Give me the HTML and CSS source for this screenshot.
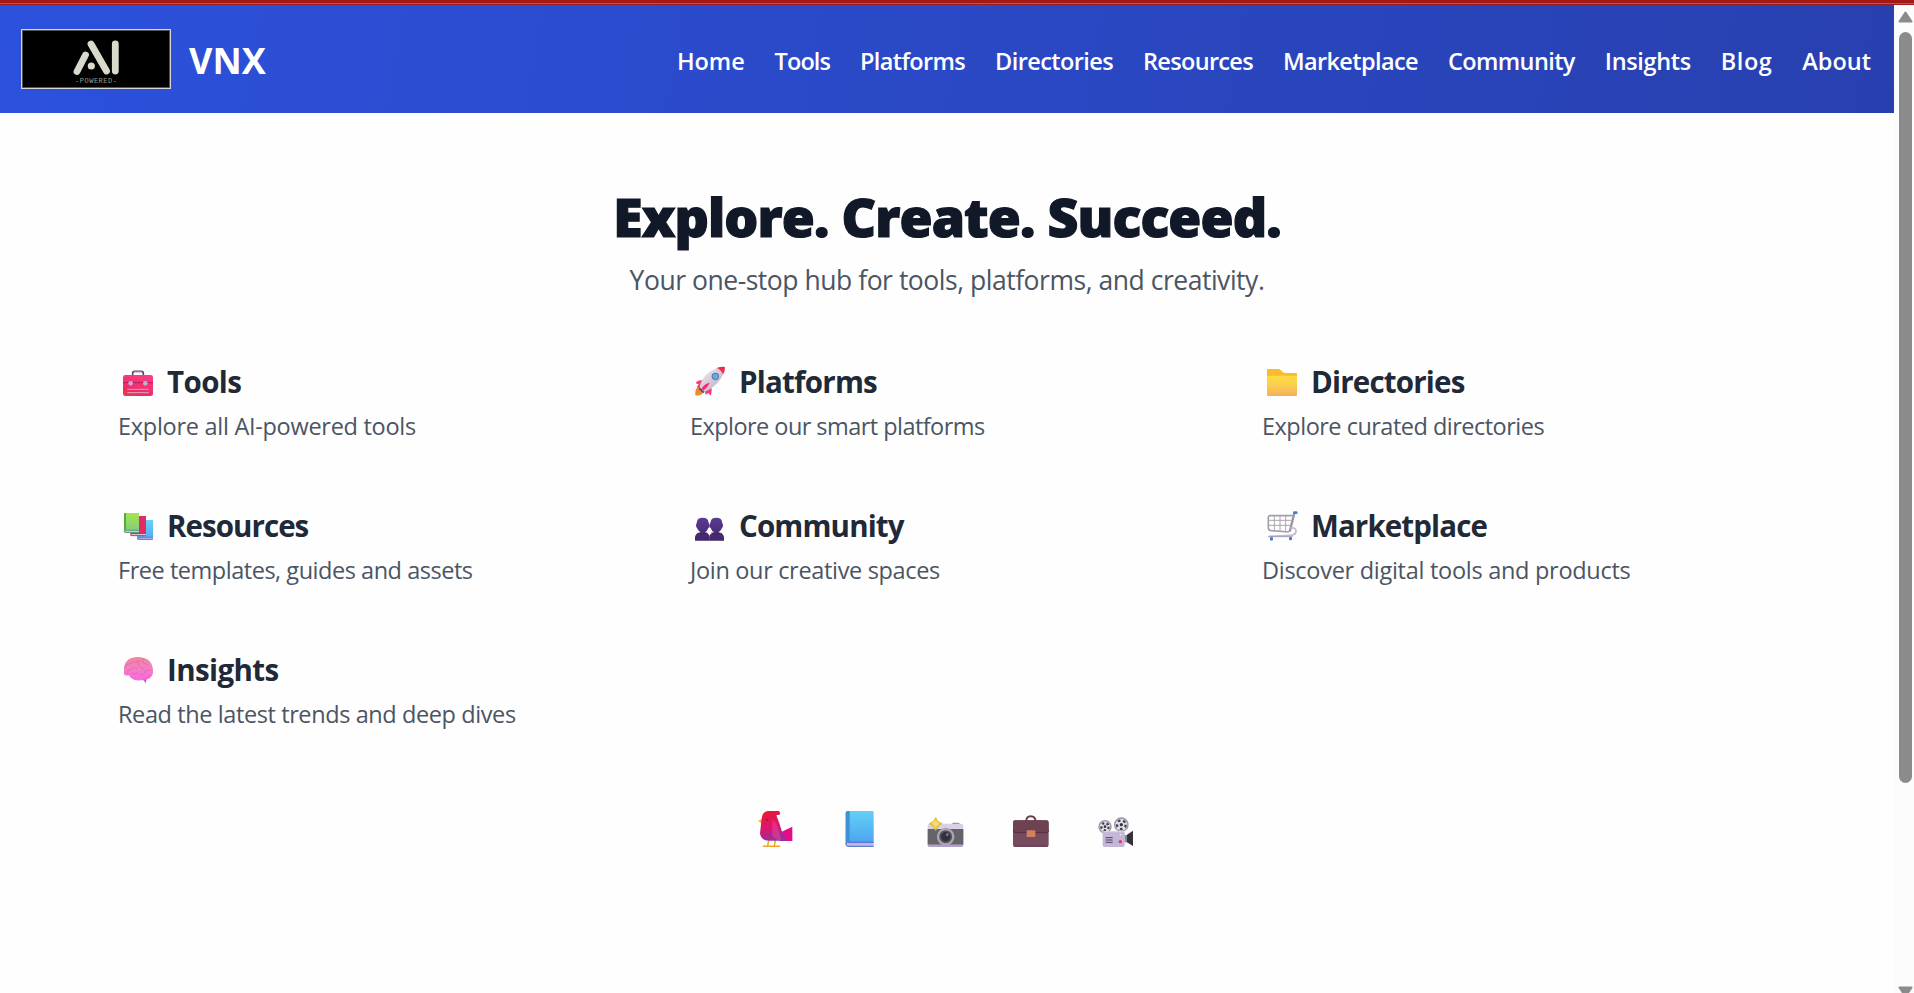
FILE: index.html
```html
<!DOCTYPE html>
<html lang="en">
<head>
<meta charset="utf-8">
<title>VNX</title>
<link rel="stylesheet" href="styles.css">
</head>
<body>
<div class="page">
  <div class="topline"></div>
  <div class="frame">
    <div class="content">
      <header class="header">
        <div class="brand">
          <svg class="logo" viewBox="0 0 150 60">
            <rect x=".5" y=".5" width="149" height="59" fill="#000" stroke="#d6d6d6"/>
            <rect x="1.5" y="1.5" width="147" height="57" fill="none" stroke="#555"/>
            <g stroke="#d9dacb" stroke-width="6.8" stroke-linecap="round">
              <path d="M56 42.500L64.500 26M70 15L85.500 42M94.300 15V42"/>
            </g>
            <circle cx="70.300" cy="37" r="3.600" fill="#d9dacb"/>
            <text x="75" y="53.800" class="logo-sub" textLength="42">-POWERED-</text>
          </svg>
          <span class="brand-name">VNX</span>
        </div>
        <nav class="nav">
          <a class="home">Home</a><a class="tools">Tools</a><a class="platforms">Platforms</a><a class="directories">Directories</a><a class="resources">Resources</a><a class="marketplace">Marketplace</a><a class="community">Community</a><a class="insights">Insights</a><a class="blog">Blog</a><a class="about">About</a>
        </nav>
      </header>
      <main>
        <h1>Explore. Create. Succeed.</h1>
        <p class="lead">Your one-stop hub for tools, platforms, and creativity.</p>
        <section class="grid">
          <article class="card card-tools">
            <h2><svg class="icon" viewBox="54 36 147 126">
              <defs><linearGradient id="tb" x1="0" y1="1" x2=".5" y2="0"><stop offset="0" stop-color="#e0413f"/><stop offset=".3" stop-color="#ee2a64"/><stop offset="1" stop-color="#f83c7e"/></linearGradient></defs>
              <path d="M98 77v-7q0-6 6-6h20q6 0 6 6v7" fill="none" stroke="#5b4668" stroke-width="5"/>
              <path d="M102 63h24" stroke="#b9a9c9" stroke-width="3"/>
              <rect x="69" y="75" width="90" height="63" rx="7" fill="url(#tb)"/>
              <path d="M69 98h90" stroke="#b81b52" stroke-width="3"/>
              <circle cx="92" cy="100" r="7" fill="#b9b0d3"/><circle cx="136" cy="100" r="7" fill="#b9b0d3"/>
              <path d="M82 118h64M82 128h64" stroke="#e0a3c4" stroke-width="3"/>
            </svg><span>Tools</span></h2>
            <p>Explore all AI-powered tools</p>
          </article>
          <article class="card card-platforms">
            <h2><svg class="icon" viewBox="60 36 147 126">
              <defs><linearGradient id="rk" x1="0" y1="0" x2="1" y2="1"><stop offset="0" stop-color="#f2eaf2"/><stop offset="1" stop-color="#b9a7bd"/></linearGradient></defs>
              <path d="M89 107Q73 114 76 136Q94 140 103 124Z" fill="#f28a24"/>
              <path d="M98 91Q82 89 77 100L86 103L80 112L94 113ZM122 105Q128 122 122 137L115 129L107 134L104 119Z" fill="#f5397b"/>
              <path d="M89 112Q95 73 142 54L161 70Q145 108 104 126Z" fill="url(#rk)"/>
              <path d="M140 54Q153 49 165 51Q166 63 159 73Q153 59 140 54Z" fill="#ea2e52"/>
              <path d="M89 112L104 126L99 130L86 117Z" fill="#684b75"/>
              <path d="M95 116L101 121Q113 112 119 98Q103 101 95 116Z" fill="#f4266d"/>
              <circle cx="136" cy="79" r="11" fill="#66718d"/><circle cx="136" cy="79" r="8" fill="#58aef8"/>
            </svg><span>Platforms</span></h2>
            <p>Explore our smart platforms</p>
          </article>
          <article class="card card-directories">
            <h2><svg class="icon" viewBox="66 36 147 126">
              <defs><linearGradient id="fd" x1="0" y1="0" x2="0" y2="1"><stop offset="0" stop-color="#fedc3f"/><stop offset=".45" stop-color="#fbcf4e"/><stop offset="1" stop-color="#f6ae5b"/></linearGradient></defs>
              <path d="M81 60q0-3 3-3h31q4 0 7 3l6 6q3 3 7 3h33q3 0 3 3v30H81Z" fill="#f8bc2c"/>
              <path d="M81 80q0-3 3-3h84q3 0 3 3v54q0 4-4 4H85q-4 0-4-4Z" fill="url(#fd)"/>
            </svg><span>Directories</span></h2>
            <p>Explore curated directories</p>
          </article>
          <article class="card card-resources">
            <h2><svg class="icon" viewBox="54 468 147 126">
              <defs><linearGradient id="b1" x1="0" y1="0" x2="0" y2="1"><stop offset="0" stop-color="#a5e34d"/><stop offset="1" stop-color="#7dcb80"/></linearGradient><linearGradient id="b2" x1="0" y1="0" x2="0" y2="1"><stop offset="0" stop-color="#69d2f5"/><stop offset="1" stop-color="#4fa8f3"/></linearGradient></defs>
              <path d="M112 510h47v60h-44q-4 0-4-5Z" fill="url(#b2)"/><path d="M159 562h-42q-4 0-4 3t4 3h42" fill="#c5bbed" stroke="#527fd9" stroke-width="3"/>
              <path d="M92 498h46v60H95q-4 0-4-5Z" fill="#df2c64"/><path d="M138 551H96q-4 0-4 3t4 3h42" fill="#ead4e8" stroke="#b5265e" stroke-width="2.500"/>
              <path d="M72 492q0-3 3-3h42v60H76q-4 0-4-5Z" fill="url(#b1)"/><path d="M72 492q0-3 3-3h3v50l-6 4Z" fill="#51a846"/><path d="M117 541H77q-4 0-4 3t4 3h40" fill="#d8dbea" stroke="#478a72" stroke-width="2.500"/>
            </svg><span>Resources</span></h2>
            <p>Free templates, guides and assets</p>
          </article>
          <article class="card card-community">
            <h2><svg class="icon" viewBox="60 468 147 126">
              <defs><linearGradient id="pp" x1="0" y1="0" x2="0" y2="1"><stop offset="0" stop-color="#5a3b93"/><stop offset="1" stop-color="#432667"/></linearGradient></defs>
              <path d="M81 515Q82 503 98 503T115 515Q119 524 119 528Q119 533 115 534Q112 543 105 547Q119 551 119 562V572H75V562Q76 550 91 547Q84 542 81 534Q78 532 78 526Z" fill="url(#pp)"/>
              <path d="M156 515Q155 503 139 503T122 515Q118 524 118 528Q118 533 122 534Q125 543 132 547Q118 551 118 562V572H162V562Q161 550 146 547Q153 542 156 534Q159 532 159 526Z" fill="url(#pp)"/>
              <path d="M82 550Q98 557 112 549M125 549Q139 557 155 550" fill="none" stroke="#3b2059" stroke-width="3"/>
            </svg><span>Community</span></h2>
            <p>Join our creative spaces</p>
          </article>
          <article class="card card-marketplace">
            <h2><svg class="icon" viewBox="66 468 147 126">
              <g fill="none" stroke="#aaa4b2" stroke-width="3"><path d="M103 498V543M120 498V544M137 498V544M87 511H154M87 526H150"/></g>
              <path d="M158 497H91q-6 0-6 6v30q0 8 9 9l53 4" fill="none" stroke="#a39fa9" stroke-width="5"/>
              <path d="M163 490L149 545" fill="none" stroke="#99949f" stroke-width="7"/>
              <path d="M151 534Q168 531 168 544Q167 555 151 556L86 559" fill="none" stroke="#c2b9cd" stroke-width="5"/>
              <path d="M85 560H158" stroke="#a796ba" stroke-width="3"/>
              <rect x="159" y="484" width="14" height="8" rx="4" fill="#467edb"/>
              <rect x="90" y="561" width="9" height="11" rx="4" fill="#467bd0"/><rect x="147" y="561" width="9" height="10" rx="4" fill="#467bd0"/>
            </svg><span>Marketplace</span></h2>
            <p>Discover digital tools and products</p>
          </article>
          <article class="card card-insights">
            <h2><svg class="icon" viewBox="54 30 147 126">
              <defs><linearGradient id="br" x1="0" y1="0" x2="0" y2="1"><stop offset="0" stop-color="#ee88a0"/><stop offset=".55" stop-color="#f47dc7"/><stop offset="1" stop-color="#f768e4"/></linearGradient></defs>
              <path d="M128 118L138 130L139 116Z" fill="#ed3fb9"/>
              <path d="M72 101V84Q75 62 92 55Q113 47 132 54Q153 60 158 82Q163 106 149 115Q139 122 128 120Q106 125 92 113Q89 107 85 106Q73 109 72 101Z" fill="url(#br)"/>
              <path d="M74 83Q80 69 91 72Q95 63 106 67Q113 60 124 64M82 99Q83 88 94 88Q102 79 112 85M111 67Q120 71 116 80M130 57Q126 66 132 70Q141 71 143 78M120 103Q133 107 135 94Q143 89 153 91M94 101Q105 104 113 98M129 120Q143 116 148 106M122 83Q130 84 133 91" fill="none" stroke="#d955a0" stroke-width="2" stroke-linecap="round" opacity=".75"/>
            </svg><span>Insights</span></h2>
            <p>Read the latest trends and deep dives</p>
          </article>
        </section>
        <div class="social">
          <svg viewBox="51 57 111 117">
            <defs><linearGradient id="bd" x1=".2" y1="0" x2=".5" y2="1"><stop offset="0" stop-color="#ea1733"/><stop offset=".55" stop-color="#db1670"/><stop offset="1" stop-color="#93329d"/></linearGradient></defs>
            <path d="M86 150L83 168M106 150L103 168M70 169H92M94 169H119" fill="none" stroke="#efa428" stroke-width="4.500" stroke-linecap="round"/>
            <path d="M66 86L54 92L66 102Z" fill="#f6b840"/>
            <path d="M119 128L157 110V153H119Z" fill="#e60a87"/>
            <path d="M65 86Q66 63 88 63H116Q122 65 119 74L109 76Q118 98 127 128L142 152H92Q62 153 60 130Z" fill="url(#bd)"/>
            <path d="M97 91Q108 92 113 112L124 151Q105 149 97 137Z" fill="#f44a9d" opacity=".45"/>
            <circle cx="82" cy="90" r="3" fill="#86203b"/>
          </svg>
          <svg viewBox="307 57 111 117">
            <defs><linearGradient id="bb" x1="0" y1="0" x2="0" y2="1"><stop offset="0" stop-color="#64cff7"/><stop offset="1" stop-color="#4ba3ef"/></linearGradient></defs>
            <path d="M318 69q0-6 6-6h74q4 0 4 4v89h-80l-4 6Z" fill="url(#bb)"/><path d="M318 69q0-6 6-6h6v92h-8l-4 7Z" fill="#3c92d4"/>
            <path d="M402 157H324q-5 0-5 6t5 6h78" fill="#c7b4e0" stroke="#3d67ca" stroke-width="3"/>
          </svg>
          <svg viewBox="23 57 111 117">
            <rect x="96" y="98" width="21" height="7" rx="2" fill="#8e8b92"/>
            <rect x="22" y="101" width="107" height="70" rx="7" fill="#d8d0e4"/><rect x="22" y="117" width="107" height="47" fill="#65626a"/>
            <path d="M22 165H129q0 6-6 6H28q-6 0-6-6" fill="#b29fd0"/>
            <circle cx="76" cy="140" r="24" fill="#56535c"/><circle cx="76" cy="140" r="23" fill="none" stroke="#aaa5b2" stroke-width="7"/><circle cx="76" cy="140" r="14" fill="#34313e"/><circle cx="81" cy="134" r="4" fill="#837993"/>
            <path d="M46 83Q49 98 65 101Q50 105 46 121Q42 105 27 101Q42 98 46 83Z" fill="#f5dc79" stroke="#e4bd2e" stroke-width="4"/>
          </svg>
          <svg viewBox="279 57 111 117">
            <path d="M319 95Q318 79 332 79T347 95" fill="none" stroke="#674149" stroke-width="6"/>
            <rect x="279" y="91" width="107" height="80" rx="7" fill="#774b5c"/>
            <path d="M279 98q0-7 7-7h93q7 0 7 7v22q0 8-8 8H287q-8 0-8-8Z" fill="#6e4351"/><path d="M280 121q1 7 8 7h90q7 0 8-7" fill="none" stroke="#523040" stroke-width="3"/>
            <rect x="320" y="121" width="26" height="20" rx="3" fill="#d18061"/><path d="M281 168H384" stroke="#653e64" stroke-width="3"/>
          </svg>
          <svg viewBox="535 57 111 117">
            <g fill="#e4deea" stroke="#98949e" stroke-width="4"><circle cx="556" cy="110" r="18"/><circle cx="605" cy="104" r="20"/></g>
            <g fill="none" stroke="#45404f" stroke-width="7"><circle cx="556" cy="110" r="11" stroke-dasharray="7 6.800"/><circle cx="605" cy="104" r="13" stroke-dasharray="8 8.300"/></g>
            <circle cx="556" cy="110" r="4" fill="#393641"/><circle cx="605" cy="104" r="5" fill="#393641"/>
            <path d="M614 135h12v22h-12" fill="#90849d"/><path d="M622 134L640 122V168L622 157Z" fill="#34313a"/>
            <rect x="549" y="123" width="66" height="48" rx="6" fill="#c3b6d6"/><path d="M552 125H612" stroke="#ded5e9" stroke-width="3"/>
            <path d="M558 143H579M558 150H579M558 157H579" stroke="#4b4258" stroke-width="3"/><circle cx="602" cy="155" r="5" fill="#e5375f"/><circle cx="603" cy="134" r="3" fill="#ede5f3"/>
          </svg>
        </div>
      </main>
    </div>
    <aside class="scrollbar">
      <svg class="arrow" viewBox="0 0 15 12"><path d="M7.500 1.500L13.500 10.500H1.500Z" fill="#8b8b8b" stroke="#8b8b8b" stroke-width="2" stroke-linejoin="round"/></svg>
      <div class="thumb"></div>
      <svg class="arrow down" viewBox="0 0 15 12"><path d="M7.500 10.500L13.500 1.500H1.500Z" fill="#8b8b8b" stroke="#8b8b8b" stroke-width="2" stroke-linejoin="round"/></svg>
    </aside>
  </div>
</div>
</body>
</html>
```
FILE: styles.css
```css
* { box-sizing: border-box; }
body { margin: 0; background: #fefefe; font-family: "Open Sans", "Noto Sans", sans-serif; overflow: hidden; }
h1, h2, p { margin: 0; }
.page { height: 993px; display: flex; flex-direction: column; overflow: hidden; }
.topline { flex: none; height: 5px; background: linear-gradient(#a31915 0 3px, #c4504b 3px 4px, #9d1b22 4px); }
.frame { flex: 1; min-height: 0; display: flex; }
.content { width: 1894px; }

.header { height: 108px; padding: 0 23px 0 21px; display: flex; justify-content: space-between; align-items: center; background: linear-gradient(100deg, #2c51dc, #2840af); color: #fff; }
.brand { display: flex; align-items: center; gap: 18px; }
.logo { display: block; width: 150px; height: 60px; }
.logo-sub { font: 7px "Liberation Mono", monospace; fill: #9b9c94; text-anchor: middle; }
.brand-name { padding-top: 4px; font-size: 36px; line-height: 54px; font-weight: 700; }
.nav { display: flex; gap: 30px; padding-top: 3px; font-size: 23.5px; font-weight: 600; line-height: 36px; }
.nav a { white-space: nowrap; }
.nav .home { letter-spacing: -0.12px; }
.nav .tools { letter-spacing: -0.9px; }
.nav .platforms { letter-spacing: -0.64px; }
.nav .directories { letter-spacing: -0.59px; }
.nav .resources { letter-spacing: -0.68px; }
.nav .marketplace { letter-spacing: -0.62px; }
.nav .community { letter-spacing: -0.6px; }
.nav .insights { letter-spacing: -0.35px; }
.nav .blog { letter-spacing: 0.5px; }

main { padding: 74px 118px 0; }
h1 { text-align: center; font-size: 53.5px; line-height: 60px; font-weight: 800; letter-spacing: -0.9px; color: #111827; -webkit-text-stroke: 1.2px #111827; }
.lead { margin-top: 12px; text-align: center; font-size: 26.5px; line-height: 42px; letter-spacing: -0.47px; color: #4b5563; }

.grid { margin-top: 61px; display: grid; grid-template-columns: repeat(3, 572px); grid-auto-rows: 144px; }
.card { white-space: nowrap; }
.card h2 { display: flex; height: 42px; font-size: 29.5px; line-height: 39px; font-weight: 700; color: #1f2937; }
.icon { flex: none; display: block; width: 49px; height: 42px; }
.card p { margin-top: 4px; font-size: 23.5px; line-height: 36px; color: #4b5563; }
.card-tools h2 { letter-spacing: -0.6px; }
.card-tools p { letter-spacing: -0.28px; }
.card-platforms h2 { letter-spacing: -0.76px; }
.card-platforms p { letter-spacing: -0.55px; }
.card-directories h2 { letter-spacing: -0.81px; }
.card-directories p { letter-spacing: -0.51px; }
.card-resources h2 { letter-spacing: -0.95px; }
.card-resources p { letter-spacing: -0.47px; }
.card-community h2 { letter-spacing: -0.85px; }
.card-community p { letter-spacing: -0.33px; }
.card-marketplace h2 { letter-spacing: -0.88px; }
.card-marketplace p { letter-spacing: -0.28px; }
.card-insights h2 { letter-spacing: -0.6px; }
.card-insights p { letter-spacing: -0.4px; }

.social { display: flex; justify-content: center; gap: 48.33px; margin-top: 15px; padding-right: 2px; }
.social svg { width: 37px; height: 39px; overflow: visible; }

.scrollbar { width: 20px; background: #fcfcfc; display: flex; flex-direction: column; align-items: center; padding: 6px 0 0 3px; }
.arrow { flex: none; width: 15px; height: 12px; }
.thumb { flex: none; width: 13px; height: 751px; margin-top: 9px; border-radius: 7px; background: #8b8b8b; }
.down { margin-top: 203px; }
```
